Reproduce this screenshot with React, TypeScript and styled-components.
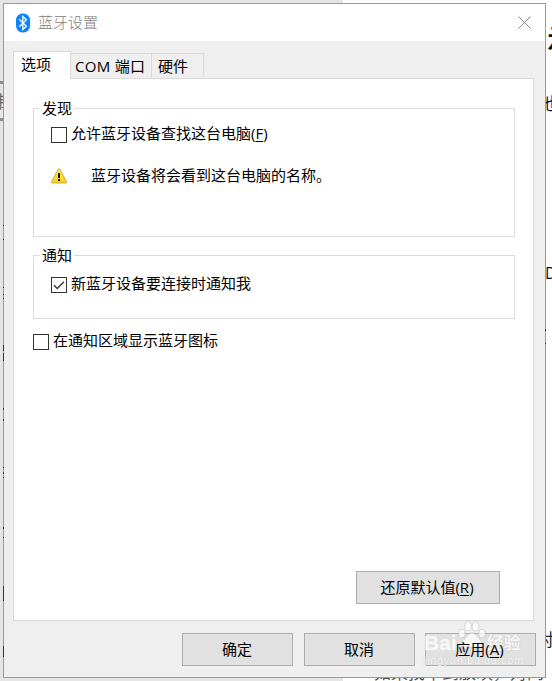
import { createGlobalStyle, styled } from "styled-components";

const edgeMarks = [
  { x: 3, y: 225, h: 1 },
  { x: 3, y: 239, h: 1 },
  { x: 3, y: 287, h: 1 },
  { x: 3, y: 294, h: 1 },
  { x: 3, y: 298, h: 1 },
  { x: 3, y: 345, h: 6 },
  { x: 3, y: 353, h: 8 },
  { x: 3, y: 408, h: 2 },
  { x: 3, y: 419, h: 2 },
  { x: 3, y: 467, h: 1 },
  { x: 3, y: 472, h: 2 },
  { x: 3, y: 477, h: 1 },
  { x: 3, y: 527, h: 2 },
  { x: 3, y: 537, h: 1 },
  { x: 3, y: 586, h: 15 },
  { x: 3, y: 646, h: 11 },
  { x: 545, y: 329, h: 2 },
  { x: 545, y: 343, h: 1 },
];

function BluetoothLogo() {
  return (
    <svg width="16" height="20" viewBox="0 0 16 20">
      <rect x="1" y="0.5" width="14" height="19" rx="6.5" fill="#0a84ff" />
      <path
        d="M4.2 6.3l7.2 7-3.6 3.2V3.5l3.6 3.2-7.2 7"
        fill="none"
        stroke="#fff"
        strokeWidth="1.3"
      />
    </svg>
  );
}

function WarningIcon() {
  return (
    <svg width="16" height="16" viewBox="0 0 16 16">
      <defs>
        <linearGradient id="warning" x1="0" y1="0" x2="0" y2="1">
          <stop offset="0" stopColor="#fff45e" />
          <stop offset="1" stopColor="#f5cf1c" />
        </linearGradient>
      </defs>
      <path
        d="M7.2 1.2Q8 0 8.8 1.2L15.4 13.6Q15.8 15 14.5 15H1.5Q.2 15 .6 13.6Z"
        fill="url(#warning)"
        stroke="#c9a227"
        strokeWidth="0.9"
      />
      <path d="M7 5h2v5H7zM7 11h2v2H7z" fill="#111" />
    </svg>
  );
}

function PawLogo() {
  return (
    <svg width="30" height="30" viewBox="0 0 28 30">
      <g fill="#fff" stroke="#bbb" strokeWidth="0.7">
        <ellipse cx="3.8" cy="12.6" rx="3.2" ry="4.2" />
        <ellipse cx="10" cy="5.3" rx="3.3" ry="4.6" />
        <ellipse cx="17.6" cy="5.3" rx="3.3" ry="4.6" />
        <ellipse cx="24" cy="12.6" rx="3.2" ry="4.2" />
        <path d="M14 12c4 0 5 4 8 6.500 4 3.500 2 9-3 8.500-4-.7-6-.7-10 0-5 .5-7-5-3-8.500C9 16 10 12 14 12z" />
      </g>
    </svg>
  );
}

type CheckProps = { checked?: boolean; label: string; shortcut?: string };

function CheckOption({ checked = false, label, shortcut }: CheckProps) {
  return (
    <CheckRow>
      <CheckSquare>
        {checked && (
          <svg width="14" height="14" viewBox="0 0 14 14">
            <path
              d="M2 7.200l3.200 3.300L12 3.700"
              fill="none"
              stroke="#333"
              strokeWidth="1.4"
            />
          </svg>
        )}
      </CheckSquare>
      <span>
        {label}
        {shortcut && (
          <>
            (<u>{shortcut}</u>)
          </>
        )}
      </span>
    </CheckRow>
  );
}

export default function App() {
  return (
    <Desktop>
      <GlobalStyle />
      <BackText $x={-5} $y={91} $size={17} $color="#666">
        制
      </BackText>
      <BackBar $y={81} />
      <BackBar $y={118} />
      <BackText $x={547} $y={20} $size={30} $color="#111" $weight={500}>
        示
      </BackText>
      <BackText $x={543} $y={93} $size={17} $color="#111">
        也
      </BackText>
      <BackText $x={545} $y={263} $size={16} $color="#111">
        D
      </BackText>
      <BackText $x={537} $y={629} $size={17} $color="#222">
        对
      </BackText>
      <BackText $x={374} $y={662} $size={17} $color="#555">
        如果找不到放映，对问
      </BackText>
      <Dialog>
        <TitleBar>
          <BluetoothLogo />
          <Title>蓝牙设置</Title>
          <svg width="13" height="13" viewBox="0 0 13 13">
            <path d="M.5.5l12 12M12.500.5l-12 12" stroke="#888" fill="none" />
          </svg>
        </TitleBar>
        <TabList>
          <Tab $width={58} $active>
            选项
          </Tab>
          <Tab $width={81} $indent={4} $spacing={0.3}>
            COM 端口
          </Tab>
          <Tab $width={52} $indent={6}>
            硬件
          </Tab>
        </TabList>
        <Panel>
          <DiscoveryGroup>
            <Legend>发现</Legend>
            <CheckOption label="允许蓝牙设备查找这台电脑" shortcut="F" />
            <Notice>
              <WarningIcon />
              <span>蓝牙设备将会看到这台电脑的名称。</span>
            </Notice>
          </DiscoveryGroup>
          <NotifyGroup>
            <Legend>通知</Legend>
            <CheckOption checked label="新蓝牙设备要连接时通知我" />
          </NotifyGroup>
          <CheckOption label="在通知区域显示蓝牙图标" />
          <RestoreButton>
            <span>
              还原默认值(<u>R</u>)
            </span>
          </RestoreButton>
        </Panel>
        <Footer>
          <Button>
            <span>确定</span>
          </Button>
          <Button>
            <span>取消</span>
          </Button>
          <ApplyButton>
            <span>
              应用(<u>A</u>)
            </span>
          </ApplyButton>
        </Footer>
      </Dialog>
      {edgeMarks.map((mark) => (
        <EdgeMark key={`${mark.x}-${mark.y}`} $x={mark.x} $y={mark.y} $h={mark.h} />
      ))}
      <Watermark>
        <WatermarkBrand>
          <b>Bai</b>
          <PawLogo />
          <strong>经验</strong>
        </WatermarkBrand>
        <WatermarkUrl>jingyan.baidu.com</WatermarkUrl>
      </Watermark>
    </Desktop>
  );
}

const GlobalStyle = createGlobalStyle`
  * {
    box-sizing: border-box;
  }
  body {
    margin: 0;
    overflow: hidden;
    font-family: "Open Sans", "Noto Sans CJK SC", sans-serif;
    font-size: 15px;
    line-height: 20px;
    color: #000;
  }
  svg {
    display: block;
    flex-shrink: 0;
  }
  u {
    text-underline-offset: 2px;
    text-decoration-thickness: 1px;
  }
`;

const Desktop = styled.div`
  position: relative;
  width: 552px;
  height: 681px;
  padding: 3px;
  overflow: hidden;
  background: linear-gradient(to right, #e5e5e5 343px, #fff 343px);
`;

const BackText = styled.span<{
  $x: number;
  $y: number;
  $size: number;
  $color: string;
  $weight?: number;
}>`
  position: absolute;
  left: ${({ $x }) => $x}px;
  top: ${({ $y }) => $y}px;
  font-size: ${({ $size }) => $size}px;
  font-weight: ${({ $weight }) => $weight ?? 400};
  line-height: 1.25;
  color: ${({ $color }) => $color};
  white-space: nowrap;
`;

const BackBar = styled.div<{ $y: number }>`
  position: absolute;
  left: 0;
  top: ${({ $y }) => $y}px;
  width: 4px;
  height: 3px;
  background: #8c8c8c;
`;

const EdgeMark = styled.i<{ $x: number; $y: number; $h: number }>`
  position: absolute;
  left: ${({ $x }) => $x}px;
  top: ${({ $y }) => $y}px;
  width: 1px;
  height: ${({ $h }) => $h}px;
  background: #333;
`;

const Dialog = styled.main`
  position: relative;
  display: flex;
  flex-direction: column;
  width: 543px;
  height: 675px;
  border: 1px solid #999;
  background: #efefef;
`;

const TitleBar = styled.header`
  display: flex;
  align-items: center;
  height: 37px;
  padding: 0 14px 0 11px;
  background: #fff;
`;

const Title = styled.h1`
  flex: 1;
  margin: 0 0 2px 7px;
  font-size: 15px;
  font-weight: 300;
  color: #808080;
`;

const TabList = styled.nav`
  display: flex;
  align-items: flex-end;
  height: 37px;
  padding-left: 9px;
`;

const Tab = styled.div<{
  $width: number;
  $indent?: number;
  $spacing?: number;
  $active?: boolean;
}>`
  position: relative;
  z-index: ${({ $active }) => ($active ? 1 : 0)};
  width: ${({ $width }) => $width}px;
  height: ${({ $active }) => ($active ? 28 : 25)}px;
  margin-bottom: ${({ $active }) => ($active ? -1 : 0)}px;
  padding-top: 2px;
  padding-left: ${({ $indent = 7 }) => $indent}px;
  border: 1px solid #d9d9d9;
  border-bottom: 0;
  border-left-width: ${({ $active }) => ($active ? 1 : 0)}px;
  background: ${({ $active }) => ($active ? "#fff" : "#efefef")};
  letter-spacing: ${({ $spacing = 0 }) => $spacing}px;
  white-space: nowrap;
`;

const Panel = styled.section`
  display: flex;
  flex-direction: column;
  width: 521px;
  height: 543px;
  margin-left: 9px;
  padding: 29px 18px 16px 19px;
  border: 1px solid #d9d9d9;
  background: #fff;
`;

const Legend = styled.h2`
  width: 34px;
  height: 20px;
  margin: -11px 0 6px -11px;
  padding-left: 2px;
  font-size: 15px;
  font-weight: 400;
  background: #fff;
  white-space: nowrap;
`;

const Group = styled.section`
  padding-left: 17px;
  border: 1px solid #dcdcdc;
`;

const DiscoveryGroup = styled(Group)`
  height: 129px;
  margin-bottom: 18px;
`;

const NotifyGroup = styled(Group)`
  height: 64px;
  margin-bottom: 12px;
  ${Legend} {
    margin-bottom: 9px;
  }
`;

const CheckRow = styled.div`
  display: flex;
  align-items: center;
  gap: 4px;
  height: 20px;
  white-space: nowrap;
  span {
    margin-top: -2px;
  }
`;

const CheckSquare = styled.div`
  width: 16px;
  height: 16px;
  margin-top: 2px;
  border: 1px solid #333;
  background: #fff;
`;

const Notice = styled.div`
  display: flex;
  align-items: center;
  gap: 24px;
  height: 20px;
  margin-top: 22px;
  span {
    margin-top: -2px;
  }
`;

const Button = styled.button`
  display: flex;
  align-items: center;
  justify-content: center;
  width: 111px;
  height: 33px;
  padding: 0;
  border: 1px solid #adadad;
  background: #e1e1e1;
  font: inherit;
  color: #000;
  span {
    position: relative;
    z-index: 2;
    margin: 0 1px 2px 0;
  }
`;

const RestoreButton = styled(Button)`
  align-self: flex-end;
  width: 144px;
  margin: auto 15px 0 0;
  span {
    margin-right: 2px;
  }
`;

const ApplyButton = styled(Button)`
  margin-left: -1px;
  span {
    margin-right: 2px;
  }
`;

const Footer = styled.footer`
  display: flex;
  justify-content: flex-end;
  gap: 11px;
  padding: 12px 9px 0 0;
`;

const Watermark = styled.div`
  position: absolute;
  z-index: 1;
  left: 424px;
  top: 620px;
  width: 100px;
  opacity: 0.75;
  color: #fff;
  text-shadow: 0 0 1px #aaa;
`;

const WatermarkBrand = styled.div`
  display: flex;
  align-items: flex-end;
  height: 33px;
  b {
    font: 700 21px/20px "Liberation Sans", sans-serif;
    -webkit-text-stroke: 0.6px #fff;
  }
  svg {
    margin-bottom: 2px;
  }
  strong {
    font-size: 17px;
    line-height: 20px;
  }
`;

const WatermarkUrl = styled.div`
  font: 11px/14px "Liberation Sans", sans-serif;
  letter-spacing: 0.65px;
`;
